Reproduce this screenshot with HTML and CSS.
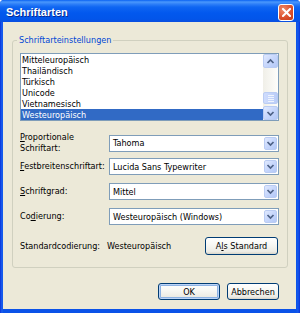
FILE: index.html
```html
<!DOCTYPE html>
<html>
<head>
<meta charset="utf-8">
<title>Schriftarten</title>
<link rel="stylesheet" href="styles.css">
</head>
<body>
<div class="window">
  <div class="titlebar">
    <span class="title">Schriftarten</span>
    <span class="close"><svg width="9" height="9" viewBox="0 0 9 9"><path d="M1 1 L8 8 M8 1 L1 8" stroke="#fff" stroke-width="2" stroke-linecap="square"/></svg></span>
  </div>
  <div class="client">
    <fieldset class="group">
      <legend>Schriftarteinstellungen</legend>
      <div class="listbox">
        <ul class="items">
          <li>Mitteleuropäisch</li>
          <li>Thailändisch</li>
          <li>Türkisch</li>
          <li>Unicode</li>
          <li>Vietnamesisch</li>
          <li class="sel">Westeuropäisch</li>
        </ul>
        <div class="vscroll">
          <div class="sbtn"><svg width="11" height="11" viewBox="0 0 11 11"><path d="M2.5 7 L5.5 4 L8.5 7" fill="none" stroke="#4D6185" stroke-width="1.7"/></svg></div>
          <div class="track"><div class="thumb"><span></span><span></span><span></span><span></span></div></div>
          <div class="sbtn"><svg width="11" height="11" viewBox="0 0 11 11"><path d="M2.5 4 L5.5 7 L8.5 4" fill="none" stroke="#4D6185" stroke-width="1.7"/></svg></div>
        </div>
      </div>
      <div class="row row-tall">
        <span class="lbl"><u>P</u>roportionale<br>Schriftart:</span>
        <div class="combo"><span class="val">Tahoma</span><span class="ddbtn"><svg width="11" height="11" viewBox="0 0 11 11"><path d="M2.5 4 L5.5 7 L8.5 4" fill="none" stroke="#4D6185" stroke-width="1.7"/></svg></span></div>
      </div>
      <div class="row r2">
        <span class="lbl"><u>F</u>estbreitenschriftart:</span>
        <div class="combo"><span class="val">Lucida Sans Typewriter</span><span class="ddbtn"><svg width="11" height="11" viewBox="0 0 11 11"><path d="M2.5 4 L5.5 7 L8.5 4" fill="none" stroke="#4D6185" stroke-width="1.7"/></svg></span></div>
      </div>
      <div class="row r3">
        <span class="lbl"><u>S</u>chriftgrad:</span>
        <div class="combo"><span class="val">Mittel</span><span class="ddbtn"><svg width="11" height="11" viewBox="0 0 11 11"><path d="M2.5 4 L5.5 7 L8.5 4" fill="none" stroke="#4D6185" stroke-width="1.7"/></svg></span></div>
      </div>
      <div class="row r3">
        <span class="lbl">Co<u>d</u>ierung:</span>
        <div class="combo"><span class="val">Westeuropäisch (Windows)</span><span class="ddbtn"><svg width="11" height="11" viewBox="0 0 11 11"><path d="M2.5 4 L5.5 7 L8.5 4" fill="none" stroke="#4D6185" stroke-width="1.7"/></svg></span></div>
      </div>
      <div class="row r5">
        <span class="lbl">Standardcodierung:</span>
        <span class="stdval">Westeuropäisch</span>
        <button class="btn std">A<u>l</u>s Standard</button>
      </div>
    </fieldset>
    <div class="dlgbtns">
      <button class="btn ok">OK</button>
      <button class="btn cancel">Abbrechen</button>
    </div>
  </div>
</div>
</body>
</html>
```

FILE: styles.css
```css
* { box-sizing: border-box; }
html, body { margin: 0; padding: 0; background: #fff; }
body {
  font-family: "DejaVu Sans Condensed", "Liberation Sans", sans-serif;
  font-size: 9px;
  color: #000;
}
.window {
  width: 300px;
  height: 313px;
  display: flex;
  flex-direction: column;
  border-radius: 4px 4px 0 0;
  background: linear-gradient(to right, #0831D9 0, #1C62F0 2px, #0A52E8 3px, #0A52E8 296px, #1458EC 298px, #0831D9 300px);
}
.titlebar {
  height: 22px;
  flex: none;
  display: flex;
  align-items: center;
  justify-content: space-between;
  padding: 0 6px 0 6px;
  background: linear-gradient(#0A62F2 0, #4A98FC 2px, #2F80F8 4px, #0F66F2 7px, #0258EE 13px, #0255EA 19px, #0A4EE0 22px);
  border-radius: 4px 4px 0 0;
}
.title {
  font-family: "Liberation Sans", Arial, sans-serif;
  font-weight: bold;
  font-size: 11px;
  color: #fff;
  text-shadow: 1px 1px 0 #0A2A90;
  padding-top: 1px;
}
.close {
  width: 16px;
  height: 17px;
  margin-top: 3px;
  border: 1px solid #fff;
  border-radius: 3px;
  background: radial-gradient(circle at 30% 30%, #F08A68, #DA4E2A 60%, #C23A16);
  display: flex;
  align-items: center;
  justify-content: center;
}
.client {
  flex: 1;
  margin: 0 4px 4px 3px;
  background: #ECE9D8;
  display: flex;
  flex-direction: column;
}
.group {
  margin: 12px 8px 0 9px;
  padding: 7px 8px 12px 7px;
  border: 1px solid #D0D0BF;
  border-radius: 3px;
  min-width: 0;
}
.group legend {
  color: #0046D5;
  line-height: 12px;
  padding: 0 2px;
  margin-left: -3px;
}
.listbox {
  height: 68px;
  border: 1px solid #7F9DB9;
  background: #fff;
  display: flex;
}
.items {
  list-style: none;
  margin: 0;
  padding: 0;
  flex: 1;
}
.items li {
  height: 11px;
  line-height: 12px;
  padding-left: 1px;
  white-space: nowrap;
}
.items li.sel {
  background: #316AC5;
  color: #fff;
}
.vscroll {
  width: 15px;
  display: flex;
  flex-direction: column;
  background: linear-gradient(to right, #F0EFE8, #FEFEFB);
}
.sbtn, .ddbtn {
  height: 14px;
  flex: none;
  border: 1px solid #BACCF3;
  border-radius: 2px;
  background: linear-gradient(135deg, #E0E9FE 0, #C7D7FC 50%, #B3C8F6 100%);
  display: flex;
  align-items: center;
  justify-content: center;
}
.track {
  flex: 1;
  display: flex;
  flex-direction: column;
  justify-content: flex-end;
  padding-bottom: 2px;
}
.thumb {
  height: 12px;
  border: 1px solid #BACCF3;
  border-radius: 2px;
  background: linear-gradient(to right, #CFDCFD, #BACDF8);
  display: flex;
  flex-direction: column;
  align-items: center;
  justify-content: center;
  gap: 1px;
}
.thumb span {
  width: 6px;
  height: 1px;
  background: #EEF4FE;
}
.row {
  display: flex;
  align-items: center;
}
.row-tall { margin-top: 11px; height: 22px; }
.r2 { margin-top: 4px; }
.r3 { margin-top: 8px; }
.r5 { margin-top: 12px; height: 18px; }
.lbl {
  width: 89px;
  flex: none;
  line-height: 11px;
  white-space: nowrap;
}
.combo {
  flex: 1;
  height: 17px;
  border: 1px solid #7F9DB9;
  background: #fff;
  display: flex;
  align-items: center;
  padding: 1px;
}
.combo .val {
  flex: 1;
  padding-left: 2px;
  white-space: nowrap;
}
.ddbtn {
  width: 13px;
  height: 13px;
}
.stdval {
  flex: 1;
  margin-left: -2px;
}
.btn {
  font-family: inherit;
  font-size: 9px;
  color: #000;
  height: 18px;
  border: 1px solid #003C74;
  border-radius: 3px;
  background: linear-gradient(#FFFFFF 0, #F8F8F4 40%, #ECEBE4 85%, #D8D4C8 100%);
  padding: 0;
  margin: 0;
}
.std { width: 73px; margin-right: 1px; }
.dlgbtns {
  display: flex;
  justify-content: flex-end;
  gap: 7px;
  margin-top: 15px;
  padding-right: 17px;
}
.ok {
  width: 62px;
  height: 17px;
  box-shadow: inset 0 0 0 1px #BCD4F6, inset 0 0 0 2px #8DB2E3;
}
.cancel {
  width: 52px;
  height: 17px;
}
```
